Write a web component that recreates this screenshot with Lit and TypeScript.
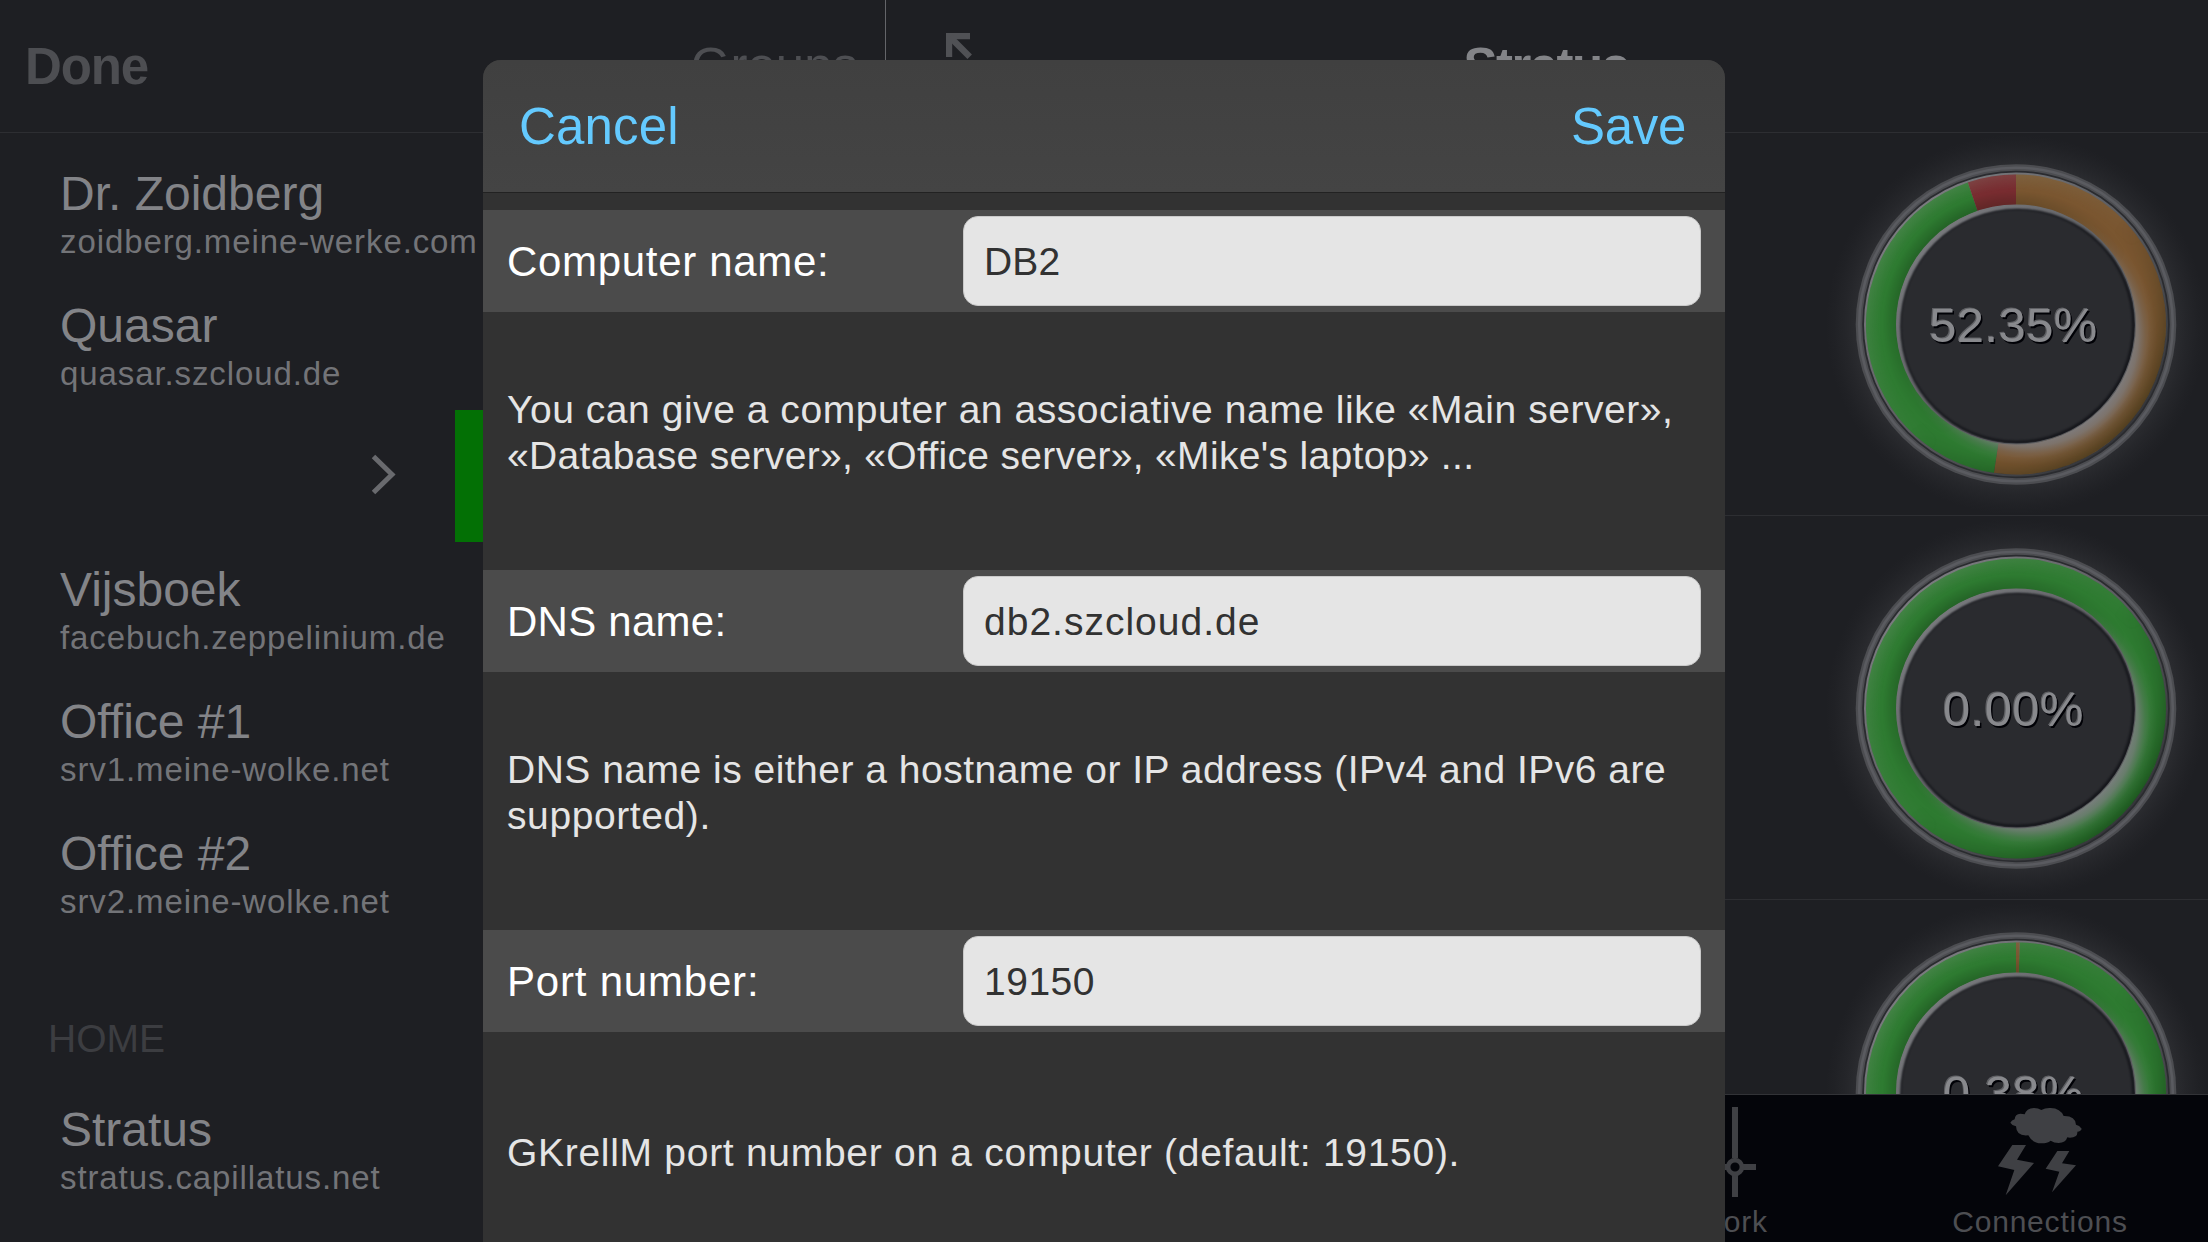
import { LitElement, html, svg, css } from "lit";
import { customElement, property } from "lit/decorators.js";
import { styleMap } from "lit/directives/style-map.js";

interface Segment {
  from: number;
  to: number;
  color: string;
}

interface Host {
  name: string;
  address: string;
}

interface HelpLine {
  text: string;
  tracking: number;
}

interface FormField {
  label: string;
  value: string;
  help: HelpLine[];
  labelTracking: number;
  valueTracking: number;
}

const GREEN = "#2e7b31";
const ORANGE = "#7a5630";
const RED = "#782c30";

@customElement("load-gauge")
class LoadGauge extends LitElement {
  @property() label = "";
  @property({ attribute: false }) segments: Segment[] = [];

  static styles = css`
    :host {
      display: block;
      width: 384px;
      height: 383px;
    }
    .dial {
      display: block;
    }
    .value {
      font: 49px "Liberation Sans", Arial, sans-serif;
      letter-spacing: 0.4px;
      text-anchor: middle;
    }
    .shade {
      fill: #000106;
    }
    .bevel {
      fill: #5f6064;
    }
    .face {
      fill: #88898d;
    }
  `;

  // Annular wedge between two fractions of the full turn, clockwise from the top.
  private wedge(s: Segment) {
    const outer = 150;
    const inner = 119.5;
    const point = (r: number, t: number) => {
      const a = t * Math.PI * 2;
      return `${(r * Math.sin(a)).toFixed(2)} ${(-r * Math.cos(a)).toFixed(2)}`;
    };
    const large = s.to - s.from > 0.5 ? 1 : 0;
    return svg`<path fill=${s.color} d=${`M${point(outer, s.from)} A${outer} ${outer} 0 ${large} 1 ${point(outer, s.to)} L${point(inner, s.to)} A${inner} ${inner} 0 ${large} 0 ${point(inner, s.from)}Z`}></path>`;
  }

  render() {
    return html`
      <svg class="dial" width="384" height="383" viewBox="-192 -191.5 384 383">
        <defs>
          <radialGradient id="glow" gradientUnits="userSpaceOnUse" cx="0" cy="0" r="190">
            <stop offset="0.84" stop-color="#2d2e32" stop-opacity="0.85"></stop>
            <stop offset="0.9" stop-color="#2b2c30" stop-opacity="0.5"></stop>
            <stop offset="0.96" stop-color="#2b2c30" stop-opacity="0.15"></stop>
            <stop offset="1" stop-color="#2b2c30" stop-opacity="0"></stop>
          </radialGradient>
          <linearGradient id="rim" x1="0.15" y1="0.15" x2="0.85" y2="0.85">
            <stop offset="0" stop-color="#7a7b7f"></stop>
            <stop offset="0.5" stop-color="#5a5b5f"></stop>
            <stop offset="1" stop-color="#35363a"></stop>
          </linearGradient>
          <linearGradient id="well" x1="0.15" y1="0.15" x2="0.85" y2="0.85">
            <stop offset="0" stop-color="#77787c"></stop>
            <stop offset="0.45" stop-color="#606165"></stop>
            <stop offset="1" stop-color="#5c5d60"></stop>
          </linearGradient>
          <radialGradient id="gloss" gradientUnits="userSpaceOnUse" cx="12" cy="12" r="170">
            <stop offset="0.606" stop-color="#7e7e82" stop-opacity="0.92"></stop>
            <stop offset="0.647" stop-color="#7e7e82" stop-opacity="0.72"></stop>
            <stop offset="0.69" stop-color="#7a7a7e" stop-opacity="0.3"></stop>
            <stop offset="0.72" stop-color="#7a7a7e" stop-opacity="0.1"></stop>
            <stop offset="0.76" stop-color="#7a7a7e" stop-opacity="0"></stop>
          </radialGradient>
          <radialGradient id="upperShade" gradientUnits="userSpaceOnUse" cx="0" cy="0" r="150">
            <stop offset="0.8" stop-color="#001000" stop-opacity="0.26"></stop>
            <stop offset="0.89" stop-color="#001000" stop-opacity="0"></stop>
            <stop offset="0.9" stop-color="#90a090" stop-opacity="0"></stop>
            <stop offset="1" stop-color="#90a090" stop-opacity="0.22"></stop>
          </radialGradient>
          <radialGradient id="lowerShade" gradientUnits="userSpaceOnUse" cx="0" cy="0" r="150">
            <stop offset="0.88" stop-color="#001000" stop-opacity="0"></stop>
            <stop offset="1" stop-color="#001000" stop-opacity="0.34"></stop>
          </radialGradient>
          <linearGradient id="toUpper" x1="0.15" y1="0.15" x2="0.85" y2="0.85">
            <stop offset="0" stop-color="#ffffff"></stop>
            <stop offset="0.6" stop-color="#000000"></stop>
          </linearGradient>
          <linearGradient id="toLower" x1="0.15" y1="0.15" x2="0.85" y2="0.85">
            <stop offset="0.5" stop-color="#000000"></stop>
            <stop offset="1" stop-color="#ffffff"></stop>
          </linearGradient>
          <mask id="upperMask" maskUnits="userSpaceOnUse" x="-160" y="-160" width="320" height="320" style="mask-type: luminance">
            <circle r="155" fill="url(#toUpper)"></circle>
          </mask>
          <mask id="lowerMask" maskUnits="userSpaceOnUse" x="-160" y="-160" width="320" height="320" style="mask-type: luminance">
            <circle r="155" fill="url(#toLower)"></circle>
          </mask>
          <filter id="soft" x="-5%" y="-5%" width="110%" height="110%" color-interpolation-filters="sRGB">
            <feGaussianBlur stdDeviation="1.3"></feGaussianBlur>
          </filter>
          <clipPath id="hole"><circle r="119"></circle></clipPath>
        </defs>
        <circle r="190" fill="url(#glow)"></circle>
        <circle r="160.3" fill="#4c4d51"></circle>
        <circle r="156.8" fill="none" stroke="#5a5b60" stroke-width="2.6"></circle>
        <circle r="153.8" fill="#2a2b2f"></circle>
        <circle r="152" fill="url(#rim)"></circle>
        ${this.segments.map((s) => this.wedge(s))}
        <circle r="134.8" fill="none" stroke="url(#gloss)" stroke-width="30.4"></circle>
        <g mask="url(#upperMask)">
          <circle r="134.8" fill="none" stroke="url(#upperShade)" stroke-width="30.4"></circle>
        </g>
        <g mask="url(#lowerMask)">
          <circle r="134.8" fill="none" stroke="url(#lowerShade)" stroke-width="30.4"></circle>
        </g>
        <circle r="120" fill="url(#well)"></circle>
        <g clip-path="url(#hole)">
          <circle cx="2" cy="2" r="117.5" fill="#14151a" filter="url(#soft)"></circle>
          <circle cx="0.7" cy="0.7" r="115.5" fill="#2a2b2f" filter="url(#soft)"></circle>
        </g>
        <text class="value shade" x="-1" y="19">${this.label}</text>
        <text class="value bevel" x="-3.6" y="16.4">${this.label}</text>
        <text class="value face" x="-2.5" y="17.5">${this.label}</text>
      </svg>
    `;
  }
}

@customElement("app-root")
class AppRoot extends LitElement {
  private hosts: (Host | null)[] = [
    { name: "Dr. Zoidberg", address: "zoidberg.meine-werke.com" },
    { name: "Quasar", address: "quasar.szcloud.de" },
    null,
    { name: "Vijsboek", address: "facebuch.zeppelinium.de" },
    { name: "Office #1", address: "srv1.meine-wolke.net" },
    { name: "Office #2", address: "srv2.meine-wolke.net" },
  ];

  private homeHosts: Host[] = [{ name: "Stratus", address: "stratus.capillatus.net" }];

  private gauges: { label: string; segments: Segment[] }[] = [
    {
      label: "52.35%",
      segments: [
        { from: 0, to: 0.5235, color: ORANGE },
        { from: 0.5235, to: 0.948, color: GREEN },
        { from: 0.948, to: 1, color: RED },
      ],
    },
    {
      label: "0.00%",
      segments: [
        { from: 0, to: 0.5, color: GREEN },
        { from: 0.5, to: 1, color: GREEN },
      ],
    },
    {
      label: "0.38%",
      segments: [
        { from: 0.0038, to: 0.5, color: GREEN },
        { from: 0.5, to: 1, color: GREEN },
        { from: 0, to: 0.0038, color: ORANGE },
      ],
    },
  ];

  private fields: FormField[] = [
    {
      label: "Computer name:",
      value: "DB2",
      help: [
        { text: "You can give a computer an associative name like «Main server»,", tracking: 0.54 },
        { text: "«Database server», «Office server», «Mike's laptop» ...", tracking: 0.32 },
      ],
      labelTracking: 0.68,
      valueTracking: 0.2,
    },
    {
      label: "DNS name:",
      value: "db2.szcloud.de",
      help: [
        { text: "DNS name is either a hostname or IP address (IPv4 and IPv6 are", tracking: 0.49 },
        { text: "supported).", tracking: 0.6 },
      ],
      labelTracking: 0.25,
      valueTracking: 1,
    },
    {
      label: "Port number:",
      value: "19150",
      help: [{ text: "GKrellM port number on a computer (default: 19150).", tracking: 0.71 }],
      labelTracking: 0.8,
      valueTracking: 0.5,
    },
  ];

  static styles = css`
    :host {
      display: block;
      font-family: "Liberation Sans", Arial, sans-serif;
    }
    .screen {
      position: relative;
      display: flex;
      width: 2208px;
      height: 1242px;
      overflow: hidden;
      background: #1e1f23;
    }
    .sidebar {
      display: flex;
      flex-direction: column;
      width: 885px;
      flex: none;
      border-right: 1px solid #646569;
    }
    .bar {
      box-sizing: border-box;
      display: flex;
      align-items: center;
      height: 132px;
      flex: none;
      font-size: 51px;
      line-height: 58px;
      color: #4d4e52;
    }
    .bar-left {
      justify-content: space-between;
      padding: 2px 27px 0 25px;
    }
    .done {
      font-weight: 700;
      letter-spacing: -1.1px;
    }
    .hosts {
      flex: 1;
      border-top: 1px solid #2d2e32;
      padding-top: 13px;
    }
    .host {
      box-sizing: border-box;
      height: 132px;
      padding: 20px 0 0 60px;
    }
    .host-name {
      font-size: 48px;
      line-height: 56px;
      color: #838488;
    }
    .host-address {
      font-size: 33px;
      line-height: 40px;
      letter-spacing: 0.9px;
      color: #737478;
    }
    .swiped {
      display: flex;
      align-items: center;
      height: 132px;
      padding-left: 370px;
    }
    .chevron {
      flex: none;
      margin: 0 59px 2px 0;
    }
    .action {
      align-self: stretch;
      flex: 1;
      background: #037005;
    }
    .group {
      box-sizing: border-box;
      height: 144px;
      padding: 78px 0 0 48px;
      font-size: 39px;
      line-height: 46px;
      color: #3c3d41;
    }
    .detail {
      display: flex;
      flex-direction: column;
      flex: 1;
      min-width: 0;
    }
    .bar-right {
      display: grid;
      grid-template-columns: 1fr auto 1fr;
      padding: 0 62px 0 60px;
    }
    .title {
      padding-top: 2px;
      font-weight: 700;
      letter-spacing: -1.5px;
      color: #838488;
    }
    .monitors {
      flex: 1;
      min-height: 0;
      overflow: hidden;
    }
    .monitor {
      box-sizing: border-box;
      display: flex;
      justify-content: flex-end;
      height: 384px;
      padding-top: 1px;
      border-bottom: 1px solid #2d2e32;
    }
    .monitor:first-child {
      padding-top: 0;
      border-top: 1px solid #2d2e32;
    }
    .tabs {
      box-sizing: border-box;
      display: flex;
      justify-content: flex-end;
      height: 148px;
      flex: none;
      padding-right: 3px;
      border-top: 1px solid #323337;
      background: #04050a;
      color: #4d4e52;
    }
    .tab {
      display: flex;
      flex-direction: column;
      align-items: center;
      width: 330px;
    }
    .tab-icon {
      display: block;
      flex: none;
    }
    .tab-label {
      font-size: 30px;
      line-height: 34px;
      letter-spacing: 0.8px;
    }
    .sheet {
      position: absolute;
      left: 483px;
      top: 60px;
      width: 1242px;
      height: 1182px;
      overflow: hidden;
      border-radius: 18px 18px 0 0;
      background: #323232;
    }
    .sheet-bar {
      box-sizing: border-box;
      display: flex;
      align-items: center;
      justify-content: space-between;
      height: 133px;
      padding: 2px 39px 0 36px;
      margin-bottom: 17px;
      border-bottom: 1px solid #222222;
      background: linear-gradient(#404040, #444444);
      color: #64caff;
      font-size: 51px;
      line-height: 58px;
    }
    .cancel {
      letter-spacing: 0.15px;
    }
    .save {
      letter-spacing: -0.3px;
    }
    .field {
      display: flex;
      align-items: center;
      justify-content: space-between;
      height: 102px;
      padding: 0 24px 0 24px;
      background: #4b4b4b;
      color: #ffffff;
      font-size: 42px;
    }
    .label {
      padding-top: 2px;
    }
    .entry {
      box-sizing: border-box;
      width: 738px;
      height: 90px;
      margin: 0;
      padding: 2px 20px 0;
      border: 1px solid #c9c9c9;
      border-radius: 15px;
      outline: none;
      background: #e5e5e5;
      color: #323232;
      font: 39px "Liberation Sans", Arial, sans-serif;
    }
    .help {
      box-sizing: border-box;
      display: flex;
      flex-direction: column;
      justify-content: center;
      height: 258px;
      padding: 0 20px 16px 24px;
      color: #e5e5e5;
      font-size: 39px;
      line-height: 46px;
    }
    .help-line {
      white-space: nowrap;
    }
  `;

  private renderHost(host: Host) {
    return html`
      <div class="host">
        <div class="host-name">${host.name}</div>
        <div class="host-address">${host.address}</div>
      </div>
    `;
  }

  private renderSwiped() {
    return html`
      <div class="swiped">
        <svg class="chevron" width="26" height="44" viewBox="0 0 26 44">
          <path d="M3.5 3.5 22 21.5 3.5 39.5" fill="none" stroke="#696a6e" stroke-width="5"></path>
        </svg>
        <div class="action"></div>
      </div>
    `;
  }

  private renderField(f: FormField) {
    return html`
      <div class="field">
        <span class="label" style=${styleMap({ letterSpacing: `${f.labelTracking}px` })}>${f.label}</span>
        <input class="entry" style=${styleMap({ letterSpacing: `${f.valueTracking}px` })} .value=${f.value} />
      </div>
      <div class="help">
        ${f.help.map(
          (line) => html`<span class="help-line" style=${styleMap({ letterSpacing: `${line.tracking}px` })}>${line.text}</span>`
        )}
      </div>
    `;
  }

  render() {
    return html`
      <div class="screen">
        <div class="sidebar">
          <div class="bar bar-left">
            <span class="done">Done</span>
            <span>Groups</span>
          </div>
          <div class="hosts">
            ${this.hosts.map((h) => (h ? this.renderHost(h) : this.renderSwiped()))}
            <div class="group">HOME</div>
            ${this.homeHosts.map((h) => this.renderHost(h))}
          </div>
        </div>

        <div class="detail">
          <div class="bar bar-right">
            <svg width="66" height="66" viewBox="0 0 66 66">
              <g fill="none" stroke="#505155" stroke-width="6.4">
                <path d="M3 24V3H24"></path>
                <path d="M4 4 23.7 23.7M42.3 42.3 62 62"></path>
                <path d="M42 63H63V42"></path>
              </g>
            </svg>
            <span class="title">Stratus</span>
          </div>
          <div class="monitors">
            ${this.gauges.map(
              (g) => html`
                <div class="monitor">
                  <load-gauge .label=${g.label} .segments=${g.segments}></load-gauge>
                </div>
              `
            )}
          </div>
          <div class="tabs">
            <div class="tab">
              <svg class="tab-icon" width="120" height="110" viewBox="0 0 120 110">
                <g fill="none" stroke="#3f4044" stroke-width="6">
                  <path d="M85 12V63M85 80V102M93 72H106M14 72H77"></path>
                  <circle cx="85" cy="72" r="6.9" stroke-width="4.6"></circle>
                </g>
              </svg>
              <span class="tab-label">Network</span>
            </div>
            <div class="tab">
              <svg class="tab-icon" width="120" height="110" viewBox="0 0 360 330">
                <g fill="#3f4044">
                  <path
                    d="M91 83Q95 75 104 73Q105 57 121 56Q128 56 134 58Q139 40 162 39Q175 39 184 45Q196 38 212 39Q241 40 251 63Q286 62 288 89Q298 91 305 101Q303 109 292 110Q294 128 270 128Q265 128 262 127Q257 144 236 144Q222 144 212 137Q202 145 184 145Q156 144 145 121Q109 125 108 94Q96 92 91 83Z"
                  ></path>
                  <path d="M97 150H138L111 194L162 204L77 301L103 225L54 214Z"></path>
                  <path d="M232 168H268L246 205L288 211L216 292L238 230L197 221Z"></path>
                </g>
              </svg>
              <span class="tab-label">Connections</span>
            </div>
          </div>
        </div>

        <div class="sheet">
          <div class="sheet-bar">
            <span class="cancel">Cancel</span>
            <span class="save">Save</span>
          </div>
          ${this.fields.map((f) => this.renderField(f))}
        </div>
      </div>
    `;
  }
}
